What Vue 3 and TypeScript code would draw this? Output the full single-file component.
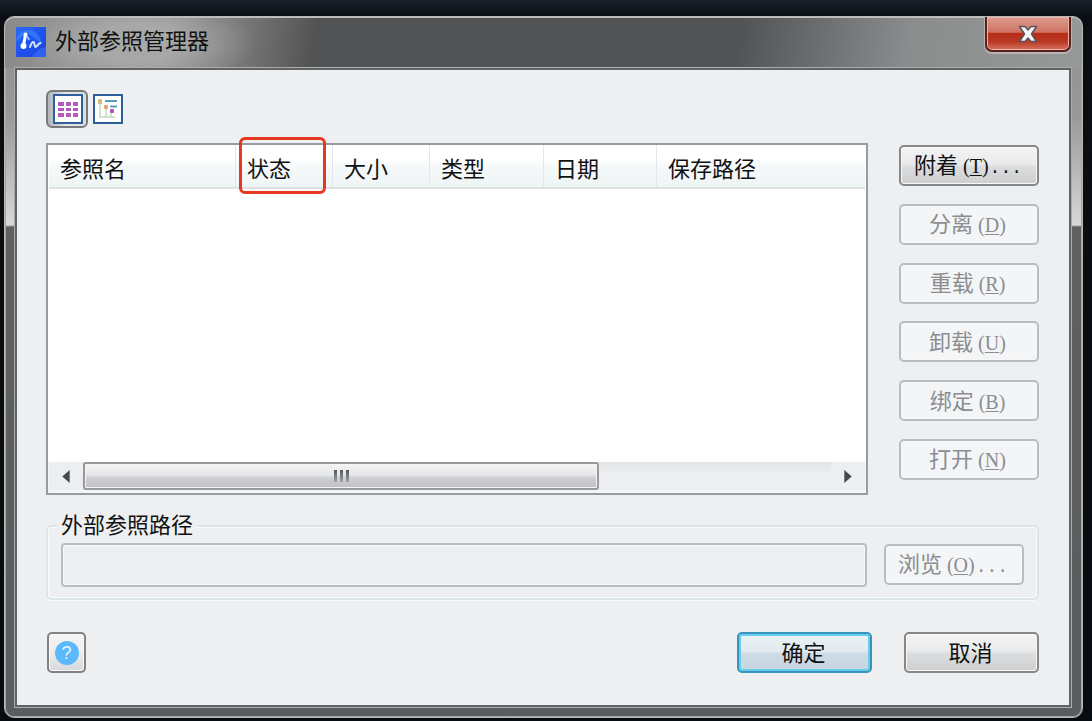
<script setup lang="ts">
import { ref } from 'vue'

interface Column { key: string; label: string; marked?: boolean }
interface Action { label: string; mnemonic: string; suffix: string; enabled: boolean }

const columns: Column[] = [
  { key: 'name', label: '参照名' },
  { key: 'status', label: '状态', marked: true },
  { key: 'size', label: '大小' },
  { key: 'type', label: '类型' },
  { key: 'date', label: '日期' },
  { key: 'path', label: '保存路径' },
]

const actions: Action[] = [
  { label: '附着', mnemonic: 'T', suffix: '...', enabled: true },
  { label: '分离', mnemonic: 'D', suffix: '', enabled: false },
  { label: '重载', mnemonic: 'R', suffix: '', enabled: false },
  { label: '卸载', mnemonic: 'U', suffix: '', enabled: false },
  { label: '绑定', mnemonic: 'B', suffix: '', enabled: false },
  { label: '打开', mnemonic: 'N', suffix: '', enabled: false },
]

const view = ref<'list' | 'tree'>('list')
const path = ref('')
</script>

<template>
  <div class="desktop">
    <main class="window">
      <header class="titlebar">
        <svg class="logo" viewBox="0 0 30 30" aria-hidden="true">
          <defs>
            <linearGradient id="logoFill" x1="0" y1="0" x2="1" y2="1">
              <stop offset="0" stop-color="#2d6cf6" />
              <stop offset="0.5" stop-color="#1f52ee" />
              <stop offset="1" stop-color="#1a46dc" />
            </linearGradient>
          </defs>
          <rect width="30" height="30" fill="url(#logoFill)" />
          <path d="M0 14C2 5 10 1 17 4c6 3 8 8 9 13l-8-6-6-5z" fill="#3f8bfa" opacity=".6" />
          <path d="M16 30c3-5 8-9 14-10v10z" fill="#3c70fa" opacity=".6" />
          <path d="M9.500 7.500L7.500 18.500" stroke="#fff" stroke-width="3" fill="none" stroke-linecap="round" />
          <path d="M9.500 7.500l3.500 5" stroke="#a9caff" stroke-width="1.500" fill="none" stroke-linecap="round" />
          <path d="M14 20c1-3 2-5 3.500-5s.5 5 2 5 2-3 5-4" stroke="#d5e6ff" stroke-width="2" fill="none" stroke-linejoin="round" stroke-linecap="round" />
          <circle cx="9.500" cy="7.500" r="2" fill="#fff" /><circle cx="7.500" cy="19" r="3" fill="#fff" />
        </svg>
        <h1>外部参照管理器</h1>
        <button class="close" type="button" aria-label="关闭">
          <svg viewBox="0 0 20 18" aria-hidden="true">
            <path d="M1.500 1.500h5.500L10 5l3-3.500h5.500L13.500 9l5 7.500H13L10 13l-3 3.500H1.500L6.500 9z" fill="#f4f4f6" stroke="#5b5360" stroke-width="1.500" stroke-linejoin="round" />
          </svg>
        </button>
      </header>

      <div class="client">
        <div class="toolbar">
          <button type="button" class="tool" :class="{ pressed: view === 'list' }" aria-label="列表" @click="view = 'list'">
            <svg viewBox="0 0 30 30" aria-hidden="true">
              <rect x="1" y="1" width="28" height="28" fill="#fff" stroke="#2d5f9a" stroke-width="2" />
              <g fill="#b35abd">
                <path d="M5 8h6v4H5zM13 8h5v4h-5zM20 8h5v4h-5zM5 14h6v3H5zM13 14h5v3h-5zM20 14h5v3h-5zM5 19h6v4H5zM13 19h5v4h-5zM20 19h5v4h-5z" />
              </g>
            </svg>
          </button>
          <button type="button" class="tool" :class="{ pressed: view === 'tree' }" aria-label="树状图" @click="view = 'tree'">
            <svg viewBox="0 0 30 30" aria-hidden="true">
              <rect x="1" y="1" width="28" height="28" fill="#fff" stroke="#2d5f9a" stroke-width="2" />
              <path d="M7 9v14h15M13 15v8M18 19v4" stroke="#bfdcbc" stroke-width="1.500" fill="none" />
              <path d="M12 7h12M17 12.500h7" stroke="#5e9abc" stroke-width="2" />
              <rect x="5" y="5" width="4" height="5" rx="1" fill="#dfb477" />
              <rect x="11" y="11" width="4" height="4" rx="1" fill="#e0a270" />
              <rect x="17" y="15" width="4" height="4" rx="1" fill="#b052b8" />
            </svg>
          </button>
        </div>

        <div class="body">
          <section class="list" aria-label="外部参照">
            <table>
              <colgroup><col v-for="c in columns" :key="c.key" :class="c.key"></colgroup>
              <thead>
                <tr>
                  <th v-for="c in columns" :key="c.key" scope="col">
                    {{ c.label }}<span v-if="c.marked" class="mark"></span>
                  </th>
                </tr>
              </thead>
            </table>
            <div class="scrollbar">
              <button type="button" class="arrow" aria-label="向左滚动">
                <svg viewBox="0 0 8 14" aria-hidden="true"><path d="M8 0v14L0 7z" fill="#45484c" /></svg>
              </button>
              <div class="track"><div class="thumb"><i></i><i></i><i></i></div></div>
              <button type="button" class="arrow" aria-label="向右滚动">
                <svg viewBox="0 0 8 14" aria-hidden="true"><path d="M0 0v14l8-7z" fill="#45484c" /></svg>
              </button>
            </div>
          </section>
          <div class="actions">
            <button v-for="a in actions" :key="a.mnemonic" type="button" class="btn" :disabled="!a.enabled">
              {{ a.label }}<span class="key">(<u>{{ a.mnemonic }}</u>)</span><span v-if="a.suffix" class="dots">{{ a.suffix }}</span>
            </button>
          </div>
        </div>

        <div class="group">
          <label for="xref-path">外部参照路径</label>
          <input id="xref-path" v-model="path" type="text" disabled>
          <button type="button" class="btn" disabled>浏览<span class="key">(<u>O</u>)</span><span class="dots">...</span></button>
        </div>

        <footer>
          <button type="button" class="help" aria-label="帮助"><span>?</span></button>
          <button type="button" class="btn default">确定</button>
          <button type="button" class="btn">取消</button>
        </footer>
      </div>
    </main>
  </div>
</template>

<style>
body { margin: 0; background: #0b0f14; }
</style>

<style scoped>
* { box-sizing: border-box; }
.desktop {
  display: flex;
  min-height: 100vh;
  padding: 16px 9px 4px 4px;
  background: linear-gradient(#18202a, #0a0e12 18px, #070c10);
  font-family: "Liberation Sans", "Noto Sans CJK SC", sans-serif;
  font-size: 22px;
  line-height: 30px;
  color: #111;
}
button, input { font: inherit; color: inherit; margin: 0; padding: 0; }
.window {
  flex: 1;
  display: flex;
  flex-direction: column;
  min-width: 0;
  padding: 0 11px 10px 10px;
  border: 1px solid #b8b8b8;
  border-radius: 10px;
  background: linear-gradient(#8e8e8e, #999 100px, #d8d8d8 208px, #606060 210px, #5b5c5d);
  box-shadow: inset 0 0 0 1px #a5a5a5;
}
.titlebar {
  display: flex;
  align-items: flex-start;
  height: 51px;
  margin: 0 -11px 0 -10px;
  padding: 0 11px;
  border-radius: 9px 9px 0 0;
  background:
    radial-gradient(120px 44px at 130px 26px, #b0b2b0b0 40%, #b0b2b000),
    linear-gradient(98deg, #8b8b8b, #949494 160px, #777 240px, #525354 310px, #525354 730px, #8b8c8d 900px, #979898);
  box-shadow: inset 0 1px #c0c0c0;
}
.logo { width: 30px; height: 30px; margin-top: 10px; }
h1 {
  margin: 10px auto 0 9px;
  font-size: 22px;
  font-weight: 400;
  line-height: 30px;
}
.close {
  display: grid;
  place-items: center;
  width: 86px;
  height: 35px;
  border: 2px solid #5a201b;
  border-top: 0;
  border-radius: 0 0 7px 7px;
  background: linear-gradient(#dc9c90, #cf7364 46%, #b52c17 50%, #b93a25 75%, #d5735f);
  box-shadow: inset 0 0 0 1px #efb3a8, 0 1px 0 1px #b9b3b2;
}
.close svg { width: 20px; height: 18px; }
.client {
  flex: 1;
  display: flex;
  flex-direction: column;
  padding: 20px 30px 32px 29px;
  border: 2px solid #606264;
  outline: 1px solid #a9abac;
  background: #eeeff1;
}
.toolbar { display: flex; align-items: center; gap: 5px; height: 38px; }
.tool { width: 30px; height: 30px; border: 0; background: none; }
.tool svg { display: block; width: 30px; height: 30px; }
.tool.pressed {
  width: 42px;
  height: 38px;
  padding-left: 5px;
  border: 2px solid #77797b;
  border-radius: 6px;
  background: linear-gradient(90deg, #b0b5bc, #e6e8ea 50%, #dcdee0);
}
.body { display: flex; gap: 31px; flex: 1; margin-top: 15px; }
.list {
  flex: 1;
  display: flex;
  flex-direction: column;
  justify-content: space-between;
  min-width: 0;
  min-height: 352px;
  padding: 0 1px 3px;
  border: 2px solid #979ba2;
  background: linear-gradient(#fff, #fff) top / 100% 318px no-repeat, #f3f6f8;
}
table { width: 100%; table-layout: fixed; border-collapse: separate; border-spacing: 0; }
.name { width: 187px; }
.status, .size { width: 97px; }
.type { width: 114px; }
.date { width: 113px; }
th {
  position: relative;
  height: 44px;
  padding: 8px 0 0 11px;
  border-right: 1px solid #e2e7e9;
  border-bottom: 2px solid #dfe1e2;
  background: linear-gradient(#fff 35%, #f5f9fa 50%, #eff4f5);
  font-weight: 400;
  text-align: left;
  white-space: nowrap;
}
th:last-child { border-right: 0; }
.mark {
  position: absolute;
  inset: -8px 6px -7px 3px;
  z-index: 1;
  border: 3px solid #e8371f;
  border-radius: 6px;
}
.scrollbar { display: flex; height: 28px; background: #e9eaec; }
.arrow { display: grid; place-items: center; width: 34px; border: 0; background: #eceef0; }
.arrow svg { width: 8px; height: 13px; }
.track { flex: 1; background: linear-gradient(#e3e4e6, #eceef0 40%); }
.thumb {
  display: flex;
  align-items: center;
  justify-content: center;
  gap: 3px;
  width: 69%;
  height: 28px;
  border: 2px solid #97999c;
  border-radius: 3px;
  background: linear-gradient(#f4f4f5, #e5e6e8 46%, #cfd0d3 58%, #bfc0c5);
  box-shadow: inset 0 0 0 1px #f4f4f5;
}
.thumb i { width: 3px; height: 12px; background: linear-gradient(#55585b, #a1a3a5); }
.actions {
  display: flex;
  flex-direction: column;
  justify-content: space-between;
  height: 338px;
  padding: 2px 0 1px;
}
.btn {
  flex: none;
  width: 140px;
  height: 41px;
  padding: 2px 2px 0 0;
  border: 2px solid #858789;
  border-radius: 5px;
  background: linear-gradient(#f3f3f4, #e9eaeb 46%, #dbdcdd 54%, #cecfd1);
  box-shadow: inset 0 0 0 1px #f8f8f9;
  line-height: 32px;
  white-space: nowrap;
}
.btn:disabled { border-color: #b7bec1; background: #f3f5f7; color: #8b8d8f; }
.key { margin: 0 1px 0 5px; font-family: "Liberation Serif", serif; font-size: 20px; }
.key u { text-decoration-thickness: 1px; text-underline-offset: 2px; }
.dots { font-family: "Liberation Mono", monospace; font-size: 18px; }
.group {
  position: relative;
  display: flex;
  align-items: center;
  gap: 17px;
  height: 75px;
  margin-top: 30px;
  padding: 4px 13px 0 13px;
  border: 2px solid #dbe5ea;
  border-radius: 5px;
  box-shadow: inset 0 0 0 1px #f8fafb, 0 1px #f8fafb;
}
.group label { position: absolute; top: -16px; left: 9px; padding: 0 4px; background: #eeeff1; }
.group input {
  flex: 1;
  min-width: 0;
  height: 44px;
  border: 2px solid #babdc0;
  border-radius: 4px;
  background: #eeeff1;
  box-shadow: inset 0 0 0 1px #f8f9fa;
}
footer { display: flex; gap: 32px; margin-top: 32px; padding-left: 1px; }
footer .btn { width: 135px; }
.help {
  display: grid;
  place-items: center;
  width: 39px;
  height: 41px;
  margin-right: auto;
  border: 2px solid #808284;
  border-radius: 5px;
  background: linear-gradient(#f4f4f5, #eee 48%, #d7d8da);
  box-shadow: inset 0 0 0 1px #f8f8f9;
}
.help span {
  width: 24px;
  height: 24px;
  border-radius: 50%;
  background: #5bb8fa;
  color: #e9f6ff;
  font-size: 18px;
  line-height: 24px;
}
.btn.default {
  border-color: #3a94b9;
  background: linear-gradient(#edf2f5, #e2eaf0 46%, #cfdce5 54%, #c6d5df);
  box-shadow: inset 0 0 0 2px #67cdee;
}
</style>
